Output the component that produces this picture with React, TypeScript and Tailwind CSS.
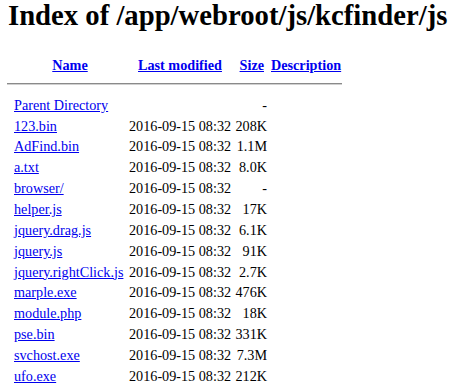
const rows: { name: string; date: string; size: string }[] = [
  { name: "Parent Directory", date: "", size: "-" },
  { name: "123.bin", date: "2016-09-15 08:32", size: "208K" },
  { name: "AdFind.bin", date: "2016-09-15 08:32", size: "1.1M" },
  { name: "a.txt", date: "2016-09-15 08:32", size: "8.0K" },
  { name: "browser/", date: "2016-09-15 08:32", size: "-" },
  { name: "helper.js", date: "2016-09-15 08:32", size: "17K" },
  { name: "jquery.drag.js", date: "2016-09-15 08:32", size: "6.1K" },
  { name: "jquery.js", date: "2016-09-15 08:32", size: "91K" },
  { name: "jquery.rightClick.js", date: "2016-09-15 08:32", size: "2.7K" },
  { name: "marple.exe", date: "2016-09-15 08:32", size: "476K" },
  { name: "module.php", date: "2016-09-15 08:32", size: "18K" },
  { name: "pse.bin", date: "2016-09-15 08:32", size: "331K" },
  { name: "svchost.exe", date: "2016-09-15 08:32", size: "7.3M" },
  { name: "ufo.exe", date: "2016-09-15 08:32", size: "212K" },
];

const link = "text-[#0000ee] underline underline-offset-[1px]";

export default function App() {
  return (
    <div className="h-[390px] w-[449px] overflow-hidden bg-white text-black font-['Liberation_Serif','Times_New_Roman',serif]">
      <h1 className="pl-[8px] text-[28.7px] font-bold leading-[30px] whitespace-nowrap">
        Index of /app/webroot/js/kcfinder/js
      </h1>

      {/* header row */}
      <div className="mt-[24.7px] flex pl-[14px] text-[14.2px] font-bold leading-[21px]">
        <div className="w-[112px] text-center">
          <a href="#" className={link}>Name</a>
        </div>
        <div className="ml-[3px] w-[102px] text-center">
          <a href="#" className={link}>Last modified</a>
        </div>
        <div className="ml-[3px] w-[33px] pr-[3px] text-right">
          <a href="#" className={link}>Size</a>
        </div>
        <div className="ml-[4px]">
          <a href="#" className={link}>Description</a>
        </div>
      </div>

      <div className="ml-[7px] mt-[7.3px] h-[2px] w-[335px] border-t border-t-[#8a8a8a] border-b border-b-[#d0d0d0]" />

      <div className="mt-[9.8px] pl-[14px] text-[14.2px] leading-[20.85px]">
        {rows.map((r) => (
          <div key={r.name} className="flex whitespace-nowrap">
            <div className="w-[112px]">
              <a href="#" className={link}>{r.name}</a>
            </div>
            <div className="ml-[3px] w-[102px]">{r.date}</div>
            <div className="ml-[3px] w-[33px] text-right">{r.size}</div>
          </div>
        ))}
      </div>
    </div>
  );
}
